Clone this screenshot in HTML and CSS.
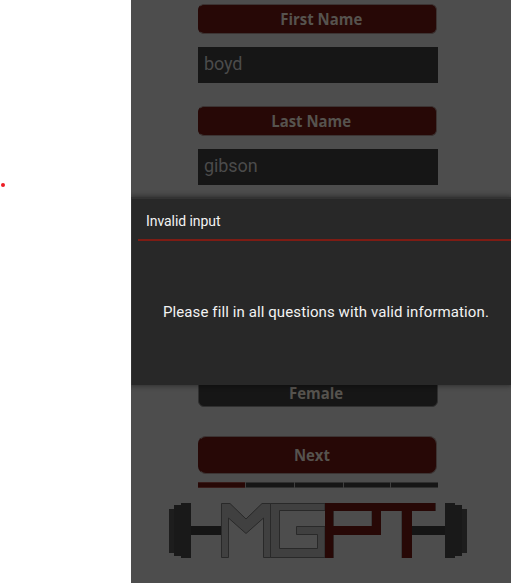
FILE: index.html
```html
<!DOCTYPE html>
<html lang="en">
<head>
<meta charset="utf-8">
<title>Invalid input</title>
<link rel="stylesheet" href="styles.css">
</head>
<body>
<main class="page">
  <aside class="margin"><span class="dot"></span></aside>
  <section class="phone">
    <form class="form">
      <div class="label first"><span>First Name</span></div>
      <div class="field">boyd</div>
      <div class="label last"><span>Last Name</span></div>
      <div class="field">gibson</div>
      <div class="option"><span>Female</span></div>
      <div class="next"><span>Next</span></div>
      <div class="progress"><i class="done"></i><i></i><i></i><i></i><i></i></div>
    </form>
    <svg class="logo" viewBox="168 502 300 58" width="300" height="58" shape-rendering="crispEdges">
      <g fill="#191919">
        <path fill="#1d1d1d" d="M169 509h6v44h-6zM461 509h6v44h-6z"/>
        <path d="M174 505h7v51h-7zM455 505h7v51h-7zM181 503h10v55h-10zM445 503h10v55h-10z"/>
        <path fill="#151515" d="M191 526h30v9h-30zM412 526h33v9h-33z"/>
      </g>
      <g fill="#404040" stroke="#292929" stroke-width="1" shape-rendering="auto">
        <path d="M221.5 503.5h8.5l16 15.500 16-15.500h8.500v54h-7v-39.500l-17.500 15.500-17.500-15.500v39.500h-7z"/>
        <path d="M270.500 503.500h54.500v7h-45.500v38h38v-14h-21v-8h28.500v31h-54.500z"/>
      </g>
      <path fill="#270806" fill-rule="evenodd" d="M325 503h111v8h-24v47h-10v-47h-21v24h-47v23h-9zM334 511v15h38v-15z"/>
      <path fill="#333" opacity=".7" d="M333 511h1v15h-1zM371 511h1v15h-1zM333 535h1v23h-1zM401 511h1v47h-1zM435 503h1v8h-1z"/>
    </svg>
    <div class="dialog" role="alertdialog">
      <h1>Invalid input</h1>
      <p>Please fill in all questions with valid information.</p>
    </div>
  </section>
</main>
</body>
</html>
```
FILE: styles.css
```css
* { box-sizing: border-box; }
body { margin: 0; background: #fff; font-family: Roboto, sans-serif; }
.page { display: flex; width: 511px; height: 583px; overflow: hidden; }
.margin { width: 131px; flex: none; padding-top: 183px; }
.dot { display: block; width: 4px; height: 4px; margin-left: 1px; border-radius: 50%; background: #ed1c24; }
.phone { position: relative; width: 380px; height: 583px; background: #4d4d4d; overflow: hidden; }
.form { margin: 0 0 0 67px; padding-top: 4px; width: 307px; }
.label, .next {
  width: 239px; height: 30px; border: 1px solid #3c3433; border-left-color: #270806; border-radius: 6px;
  background: #270806; color: #56534e;
  display: flex; justify-content: center; align-items: center;
  font: bold 16.500px/28px "Open Sans", sans-serif;
}
.label span, .option span, .next span { display: block; transform: scaleX(.905); white-space: nowrap; }
.first span { margin-left: 7px; }
.last span { margin-right: 12px; }
.field {
  width: 240px; height: 36px; margin: 13px 0 23px; padding-left: 6px;
  background: #161616; color: #4b4b4b; font-size: 18px; line-height: 34px; letter-spacing: -.1px;
}
.option {
  width: 240px; height: 30px; margin-top: 192px; border: 1px solid #303030; border-radius: 6px;
  background: #161616; color: #56534e; text-align: center; font: bold 16.500px/30px "Open Sans", sans-serif;
}
.option span { margin-right: 4px; }
.next { height: 38px; margin-top: 29px; border-radius: 8px; }
.next span { margin-right: 12px; }
.progress {
  display: grid; grid-template-columns: 47px 48px 48px 46px 47px; gap: 1px;
  width: 240px; height: 6px; margin-top: 8px; background: #404040;
}
.progress i { background: #161616; border: solid #303030; border-width: 1px 0; }
.progress .done { background: #270806; border-color: #381b19; }
.logo { display: block; margin: 14px 0 0 37px; }
.dialog {
  position: absolute; top: 197px; left: 0; width: 380px; height: 188px;
  background: #282828; border-top: 2px solid #333; border-left: 1px solid #333;
  box-shadow: 0 0 5px 1px rgba(0,0,0,.4); color: #f3f3f3;
}
.dialog h1 {
  margin: 0 0 0 6px; padding-left: 8px; height: 42px; border-bottom: 2px solid #7e1c14;
  font-size: 14px; line-height: 45px; font-weight: 400; letter-spacing: -.07px;
}
.dialog p {
  margin: 60px 0 0 31px; font-size: 15px; line-height: 22px; white-space: nowrap;
  letter-spacing: .1px; font-variant-ligatures: none;
}
```
